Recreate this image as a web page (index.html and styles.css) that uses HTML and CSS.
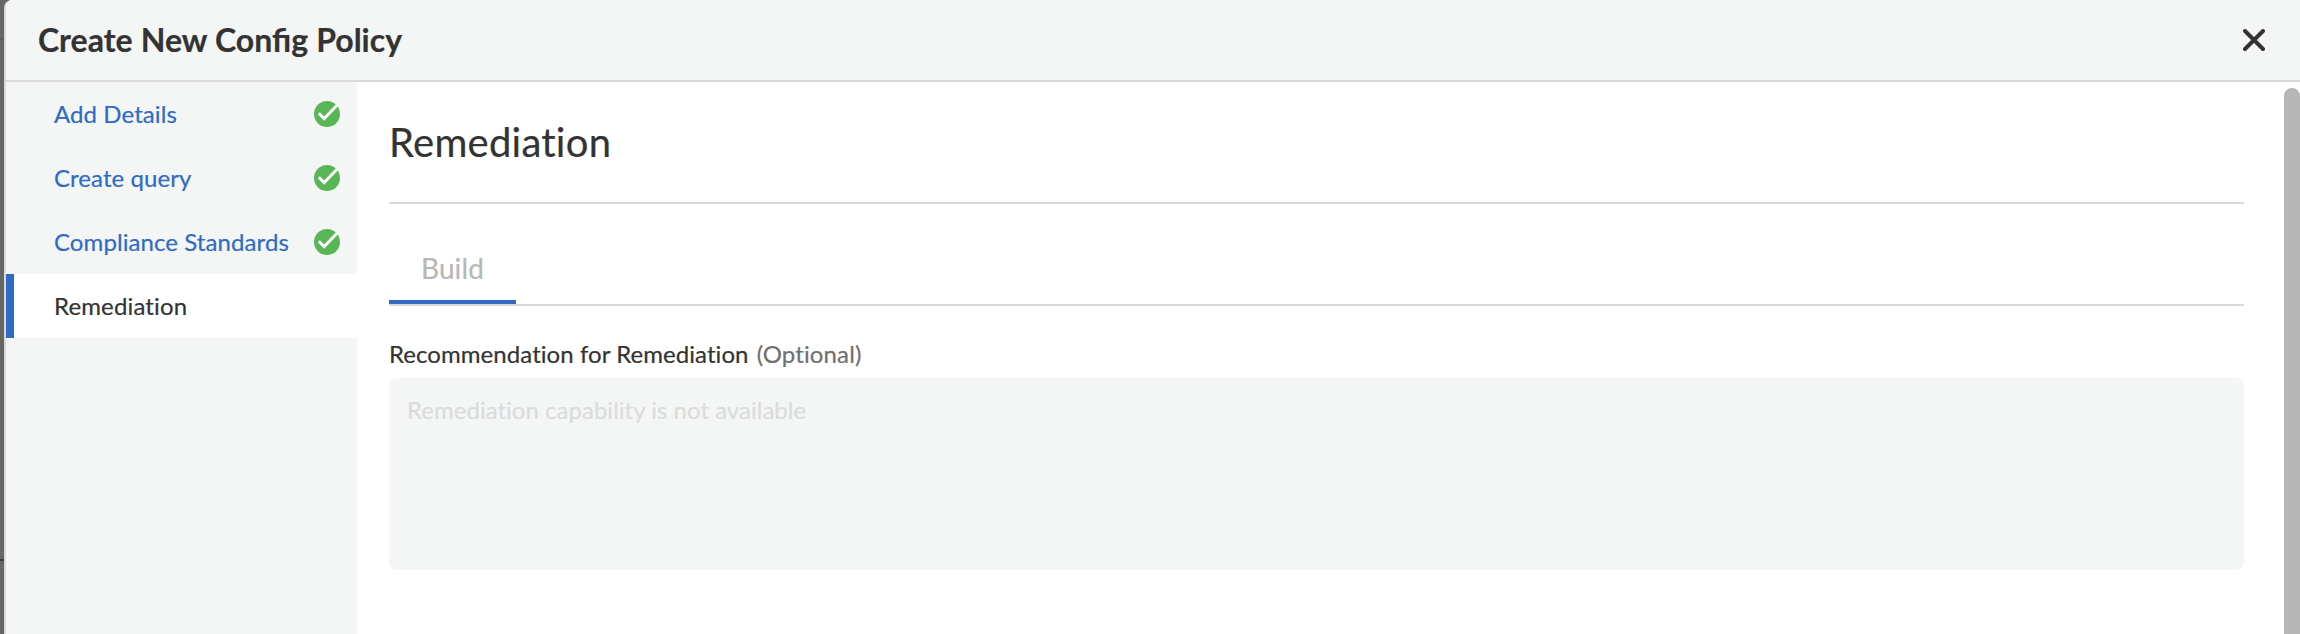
FILE: index.html
```html
<!DOCTYPE html>
<html lang="en">
<head>
<meta charset="utf-8">
<title>Create New Config Policy</title>
<link rel="stylesheet" href="styles.css">
</head>
<body>
<div class="backdrop">
  <div class="modal">
    <header class="modal-header">
      <h1 class="modal-title">Create New Config Policy</h1>
      <button class="close" aria-label="Close">
        <svg width="22" height="22" viewBox="0 0 22 22"><path d="M2 2 20 20M20 2 2 20" fill="none" stroke="#333" stroke-width="3.9" stroke-linecap="round"/></svg>
      </button>
    </header>
    <div class="modal-body">
      <nav class="steps">
        <a class="step">Add Details
          <svg class="check" viewBox="0 0 26 26"><circle cx="13" cy="13" r="13"/><path d="M4.8 12.2 10.2 17.6 23.2 4"/></svg></a>
        <a class="step">Create query
          <svg class="check" viewBox="0 0 26 26"><circle cx="13" cy="13" r="13"/><path d="M4.8 12.2 10.2 17.6 23.2 4"/></svg></a>
        <a class="step">Compliance Standards
          <svg class="check" viewBox="0 0 26 26"><circle cx="13" cy="13" r="13"/><path d="M4.8 12.2 10.2 17.6 23.2 4"/></svg></a>
        <a class="step step-active">Remediation</a>
      </nav>
      <main class="content">
        <h2 class="section-title">Remediation</h2>
        <div class="tabs"><div class="tab">Build</div></div>
        <div class="label">Recommendation for Remediation <span class="optional">(Optional)</span></div>
        <div class="textbox">Remediation capability is not available</div>
      </main>
      <div class="scrollbar"><div class="thumb"></div></div>
    </div>
  </div>
</div>
</body>
</html>
```
FILE: styles.css
```css
* { box-sizing: border-box; }

body {
  margin: 0;
  font-family: Lato, "Liberation Sans", sans-serif;
  font-size: 24px;
  font-variant-ligatures: none;
  -webkit-text-stroke: 0.2px currentColor;
  color: #333;
}

.backdrop {
  height: 634px;
  padding-left: 4px;
  overflow: hidden;
  background:
    linear-gradient(#3b3939, #3b3939) 0 559px / 4px 2px no-repeat,
    linear-gradient(#5d5b5a, #5d5b5a) 0 38px / 4px 2px no-repeat,
    #686665;
}

.modal {
  display: flex;
  flex-direction: column;
  height: 650px;
  border-left: 2px solid #dadada;
  border-top-left-radius: 8px;
  background: #fff;
  overflow: hidden;
}

.modal-header {
  display: flex;
  align-items: center;
  justify-content: space-between;
  flex: none;
  height: 82px;
  padding: 0 35px 0 32px;
  border-bottom: 2px solid #dadada;
  background: #f4f6f5;
}

.modal-title {
  margin: 0;
  font-size: 32px;
  line-height: 38px;
  font-weight: 700;
  font-variant-ligatures: normal;
  word-spacing: 0.4px;
}

.close {
  display: flex;
  padding: 0;
  border: 0;
  background: none;
}

.modal-body { display: flex; flex: 1; }

.steps { width: 351px; background: #f4f6f5; }

.step {
  display: flex;
  align-items: center;
  justify-content: space-between;
  height: 64px;
  padding: 0 17px 2px 48px;
  letter-spacing: 0.08px;
  color: #2f6bc5;
}

.step-active {
  padding-left: 40px;
  border-left: 8px solid #2f6bc5;
  background: #fff;
  letter-spacing: 0.14px;
  color: #333;
}

.check {
  width: 26px;
  height: 26px;
  margin-top: 2px;
  fill: #58b656;
}
.check path { fill: none; stroke: #fff; stroke-width: 3; }

.content { flex: 1; padding: 0 40px 0 32px; }

.section-title {
  height: 122px;
  margin: 0;
  padding-top: 36px;
  border-bottom: 2px solid #dadada;
  font-size: 40px;
  line-height: 48px;
  font-weight: 400;
  letter-spacing: 0.25px;
}

.tabs {
  display: flex;
  align-items: flex-end;
  height: 102px;
  border-bottom: 2px solid #dadada;
}

.tab {
  width: 127px;
  height: 68px;
  padding: 15px 32px 0;
  border-bottom: 4px solid #2f6bc5;
  font-size: 28px;
  line-height: 34px;
  letter-spacing: 0.1px;
  color: #b7b7b7;
}

.label {
  height: 72px;
  padding-top: 33px;
  line-height: 29px;
  letter-spacing: 0.06px;
}
.optional { margin-left: 2px; letter-spacing: 0.12px; color: #707070; }

.textbox {
  height: 192px;
  padding: 17px 18px;
  border-radius: 8px;
  background: #f4f6f5;
  line-height: 29px;
  letter-spacing: 0.02px;
  color: #dadcdb;
}

.scrollbar { width: 16px; padding-top: 6px; }
.thumb { height: 570px; border-radius: 8px; background: #b7b7b7; }
```
